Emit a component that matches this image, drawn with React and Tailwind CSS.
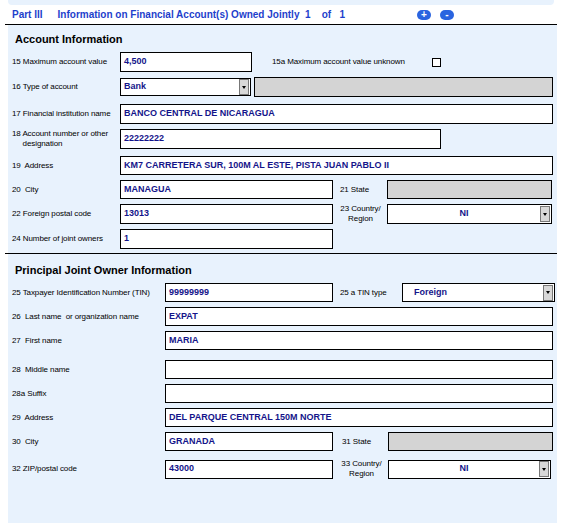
const F = { fontFamily: '"Liberation Sans", Arial, sans-serif' };

function Box({ w, v, gray, center, sel, h = 'h-[20px]', extra = '' }) {
  return (
    <div className={`${w} shrink-0 ${h} border border-black flex items-center ${gray ? 'bg-[#d4d4d4] border-[#555]' : 'bg-white'} ${extra}`}>
      <span className={`flex-1 px-[3px] text-[9px] font-bold text-[#14148a] ${center ? 'text-center' : ''}`}>{v}</span>
      {sel && (
        <div className="w-[10px] h-[16px] mr-[1px] bg-[#d8d8d8] border border-[#777] flex items-center justify-center">
          <div className="w-0 h-0 border-l-[2px] border-r-[2px] border-t-[3px] border-l-transparent border-r-transparent border-t-black" />
        </div>
      )}
    </div>
  );
}

function L({ w, children, cls = '' }) {
  return <div className={`${w} shrink-0 text-[8px] text-black leading-[10px] tracking-[-0.1px] ${cls}`}>{children}</div>;
}

export default function App() {
  return (
    <div style={F} className="w-[562px] h-[523px] bg-white relative overflow-hidden">
      <div className="mx-[8px] h-[5px] bg-[#e8f2fd] rounded-b-[4px]" />
      <div className="h-[20px] flex items-center text-[10px] font-bold text-[#1e3fcc] pl-[7px] border-b border-black ml-[5px] mr-[5px]">
        <span>Part III</span>
        <span className="ml-[15px]">Information on Financial Account(s) Owned Jointly&nbsp; 1 &nbsp;&nbsp; of &nbsp; 1</span>
        <span className="ml-[72px] w-[14px] h-[10px] rounded-full bg-[#2a64e0] text-white text-[10px] leading-[10px] text-center">+</span>
        <span className="ml-[9px] w-[14px] h-[10px] rounded-full bg-[#2a64e0] text-white text-[10px] leading-[9px] text-center">-</span>
      </div>
      <div className="ml-[8px] mr-[5px] bg-[#e8f2fd] h-[498px] pt-[6px]">
        <div className="pl-[7px] text-[11px] font-bold text-black h-[14px]">Account Information</div>
        <div className="pl-[4px]">
          <div className="flex items-center mt-[7px]">
            <L w="w-[108px]">15 Maximum account value</L>
            <Box w="w-[132px]" v="4,500" />
            <L w="w-[160px]" cls="ml-[20px]">15a Maximum account value unknown</L>
            <div className="w-[9px] h-[9px] border border-black bg-white" />
          </div>
          <div className="flex items-center mt-[5px]">
            <L w="w-[108px]">16 Type of account</L>
            <Box w="w-[131px]" v="Bank" sel h="h-[18px]" />
            <Box w="w-[299px]" gray extra="ml-[3px]" />
          </div>
          <div className="flex items-center mt-[7px]">
            <L w="w-[108px]">17 Financial institution name</L>
            <Box w="w-[433px]" v="BANCO CENTRAL DE NICARAGUA" />
          </div>
          <div className="flex items-center mt-[5px]">
            <L w="w-[108px]">18 Account number or other<br />&nbsp;&nbsp;&nbsp;&nbsp; designation</L>
            <Box w="w-[321px]" v="22222222" />
          </div>
          <div className="flex items-center mt-[7px]">
            <L w="w-[108px]">19&nbsp; Address</L>
            <Box w="w-[433px]" v="KM7 CARRETERA SUR, 100M AL ESTE, PISTA JUAN PABLO II" h="h-[19px]" />
          </div>
          <div className="flex items-center mt-[5px]">
            <L w="w-[108px]">20&nbsp; City</L>
            <Box w="w-[213px]" v="MANAGUA" h="h-[19px]" />
            <L w="w-[47px]" cls="ml-[7px]">21 State</L>
            <Box w="w-[165px]" gray h="h-[19px]" />
          </div>
          <div className="flex items-center mt-[5px]">
            <L w="w-[108px]">22 Foreign postal code</L>
            <Box w="w-[213px]" v="13013" />
            <L w="w-[53px]" cls="ml-[1px] text-center">23 Country/<br />Region</L>
            <Box w="w-[165px]" v="NI" center sel />
          </div>
          <div className="flex items-center mt-[5px]">
            <L w="w-[108px]">24 Number of joint owners</L>
            <Box w="w-[213px]" v="1" />
          </div>
        </div>
        <div className="border-b border-black mt-[4px] -ml-[3px]" />
        <div className="pl-[7px] text-[11px] font-bold text-black h-[14px] mt-[8px]">Principal Joint Owner Information</div>
        <div className="pl-[4px]">
          {[
            ['25 Taxpayer Identification Number (TIN)', '99999999', 'w-[168px]', 'tin'],
            ['26&nbsp; Last name&nbsp; or organization name', 'EXPAT', 'w-[388px]'],
            ['27&nbsp; First name', 'MARIA', 'w-[388px]'],
            ['28&nbsp; Middle name', '', 'w-[388px]', null, 'mt-[10px]'],
            ['28a Suffix', '', 'w-[388px]'],
            ['29&nbsp; Address', 'DEL PARQUE CENTRAL 150M NORTE', 'w-[388px]'],
            ['30&nbsp; City', 'GRANADA', 'w-[168px]', 'state'],
            ['32 ZIP/postal code', '43000', 'w-[168px]', 'country', 'mt-[8px]'],
          ].map(([l, v, w, x, mt], i) => (
            <div key={i} className={`flex items-center ${i === 0 ? 'mt-[7px]' : mt || 'mt-[5px]'}`}>
              <L w="w-[153px]"><span dangerouslySetInnerHTML={{ __html: l }} /></L>
              <Box w={w} v={v} h="h-[19px]" />
              {x === 'tin' && (<><L w="w-[62px]" cls="ml-[7px]">25 a TIN type</L><Box w="w-[153px]" v="Foreign" sel h="h-[19px]" extra="pl-[8px]" /></>)}
              {x === 'state' && (<><L w="w-[46px]" cls="ml-[9px]">31 State</L><Box w="w-[165px]" gray h="h-[19px]" /></>)}
              {x === 'country' && (<><L w="w-[53px]" cls="ml-[2px] text-center">33 Country/<br />Region</L><Box w="w-[163px]" v="NI" center sel h="h-[19px]" /></>)}
            </div>
          ))}
        </div>
      </div>
    </div>
  );
}
